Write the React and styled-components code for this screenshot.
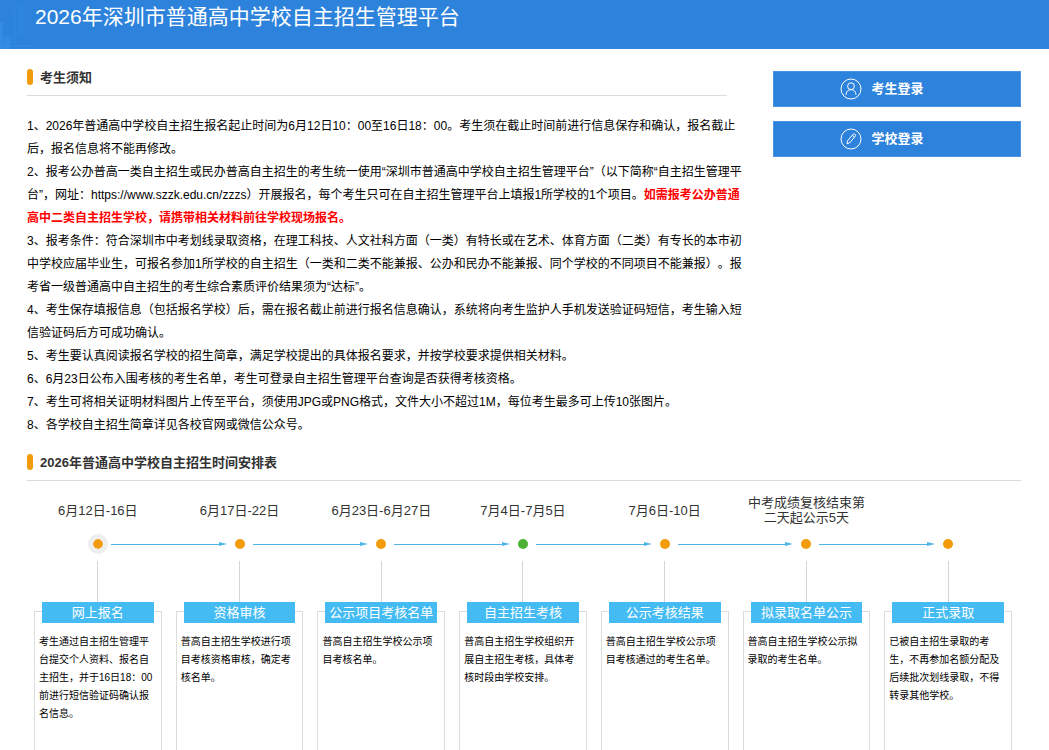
import React from "react";
import styled, { createGlobalStyle } from "styled-components";

const GlobalStyle = createGlobalStyle`
  * {
    box-sizing: border-box;
  }
  body {
    margin: 0;
    background: #fff;
    color: #000;
    font-family: "Liberation Sans", "Noto Sans CJK SC", sans-serif;
    font-size: 12px;
    text-spacing-trim: space-all;
  }
`;

const Page = styled.div`
  display: flex;
  flex-direction: column;
  min-height: 100vh;
`;

const Header = styled.header`
  position: relative;
  padding: 2px 35px 17px;
  background: #2d82dc;
`;

const Skyline = styled.svg`
  position: absolute;
  left: 0;
  top: 0;
`;

const SiteTitle = styled.h1`
  position: relative;
  margin: 0;
  color: #fff;
  font-size: 21px;
  font-weight: 400;
  line-height: 30px;
`;

const Content = styled.main`
  display: flex;
  flex-direction: column;
  flex: 1;
  padding: 9px 28px 0 27px;
`;

const Top = styled.div`
  display: flex;
  gap: 28px;
`;

const Notice = styled.section`
  flex: 1;
  min-width: 0;
`;

const SectionTitle = styled.h2`
  display: flex;
  align-items: center;
  gap: 7px;
  height: 38px;
  margin: 0 ${(props) => (props.$short ? "18px" : "0")} 0 0;
  border-bottom: 1px solid #dcdcdc;
  color: #333;
  font-size: 13px;
  font-weight: 600;

  &::before {
    content: "";
    width: 6px;
    height: 16px;
    border-radius: 3px;
    background: #f39c0b;
  }
`;

const NoticeBody = styled.div`
  padding: 19px 0 6px;
  line-height: 23px;

  p {
    margin: 0;
  }
`;

const Warn = styled.strong`
  color: #f00;
`;

const Side = styled.aside`
  display: flex;
  flex-direction: column;
  gap: 14px;
  width: 248px;
  padding-top: 13px;
`;

const LoginButton = styled.button`
  display: flex;
  align-items: center;
  justify-content: center;
  gap: 9px;
  height: 36px;
  padding: 0 30px 0 0;
  border: 1px solid #4a95e4;
  background: #2d82dc;
  color: #fff;
  font-family: inherit;
  font-size: 13px;
  font-weight: 700;
  cursor: pointer;
`;

const LoginLabel = styled.span`
  padding-bottom: 4px;
`;

const Schedule = styled.section`
  display: flex;
  flex-direction: column;
  flex: 1;
`;

const Steps = styled.ol`
  display: grid;
  grid-template-columns: repeat(7, 1fr);
  flex: 1;
  margin: 0;
  padding: 5px 2px 0 0;
  list-style: none;
`;

const Step = styled.li`
  display: flex;
  flex-direction: column;
  min-width: 0;
`;

const StepDate = styled.div`
  display: flex;
  align-items: center;
  justify-content: center;
  height: 48px;
  padding: 0 10px;
  color: #333;
  font-size: 13px;
  line-height: 15px;
  text-align: center;
`;

const Rail = styled.div`
  display: grid;
  grid-template-columns: 1fr 20px 1fr;
  align-items: center;
  height: 20px;
`;

const Dot = styled.span`
  grid-column: 2;
  width: 20px;
  height: 20px;
  border: 5px solid ${(props) => (props.$first ? "#eee" : "transparent")};
  border-radius: 50%;
  background: ${(props) => (props.$current ? "#4cb034" : "#f39c0b")};
  background-clip: padding-box;
`;

/* runs from this dot over to the next column's dot */
const Arrow = styled.span`
  display: flex;
  align-items: center;
  margin: 0 calc(3px - 100%) 0 3px;

  &::before {
    content: "";
    flex: 1;
    height: 1px;
    background: #4fb5e8;
  }
  &::after {
    content: "";
    border-left: 8px solid #4fb5e8;
    border-top: 2px solid transparent;
    border-bottom: 2px solid transparent;
  }
`;

const Stem = styled.div`
  align-self: center;
  width: 1px;
  height: 41px;
  margin-top: 7px;
  background: #d5d5d5;
`;

const Card = styled.div`
  flex: 1;
  margin: 9px 7px 0;
  border: 1px solid #dcdcdc;
  border-bottom: 0;
`;

const CardTitle = styled.h3`
  margin: -10px 7px 0;
  background: #44bbf2;
  color: #fff;
  font-size: 13px;
  font-weight: 400;
  line-height: 21px;
  text-align: center;
  white-space: nowrap;
`;

const CardText = styled.p`
  margin: 0;
  padding: 10px 6px 10px 4px;
  font-size: 10px;
  line-height: 18px;
`;

const steps = [
  {
    date: "6月12日-16日",
    title: "网上报名",
    text: "考生通过自主招生管理平台提交个人资料、报名自主招生，并于16日18：00前进行短信验证码确认报名信息。",
  },
  {
    date: "6月17日-22日",
    title: "资格审核",
    text: "普高自主招生学校进行项目考核资格审核，确定考核名单。",
  },
  {
    date: "6月23日-6月27日",
    title: "公示项目考核名单",
    text: "普高自主招生学校公示项目考核名单。",
  },
  {
    date: "7月4日-7月5日",
    title: "自主招生考核",
    text: "普高自主招生学校组织开展自主招生考核，具体考核时段由学校安排。",
    current: true,
  },
  {
    date: "7月6日-10日",
    title: "公示考核结果",
    text: "普高自主招生学校公示项目考核通过的考生名单。",
  },
  {
    date: "中考成绩复核结束第二天起公示5天",
    title: "拟录取名单公示",
    text: "普高自主招生学校公示拟录取的考生名单。",
  },
  {
    date: "",
    title: "正式录取",
    text: "已被自主招生录取的考生，不再参加名额分配及后续批次划线录取，不得转录其他学校。",
  },
];

const UserIcon = () => (
  <svg width="22" height="22" viewBox="0 0 22 22" fill="none" stroke="#fff">
    <circle cx="11" cy="11" r="10" />
    <circle cx="11" cy="8.2" r="3.4" />
    <path d="M6 16.8c.2-3.2 2-5.2 5-5.2s4.8 2 5 5.2" />
  </svg>
);

const PencilIcon = () => (
  <svg width="22" height="22" viewBox="0 0 22 22" fill="none" stroke="#fff">
    <circle cx="11" cy="11" r="10" />
    <path d="M7 15.8l.6-3 5.7-6.7c.8-.8 2.9.8 2.2 1.8l-5.6 6.7zM12.3 7.3l2.100 1.8" />
  </svg>
);

export default function App() {
  return (
    <>
      <GlobalStyle />
      <Page>
        <Header>
          <Skyline width="40" height="49" viewBox="0 0 40 49" fill="#3f9aea">
            <path d="M0 22h3v27H0z" opacity=".4" />
            <path d="M4 36h7v13H4z" opacity=".35" />
            <path d="M13 10h3v34h-3zM18 4h6v32h-6z" opacity=".18" />
            <path d="M0 45h32v2H0z" opacity=".2" />
          </Skyline>
          <SiteTitle>2026年深圳市普通高中学校自主招生管理平台</SiteTitle>
        </Header>
        <Content>
          <Top>
            <Notice>
              <SectionTitle $short>考生须知</SectionTitle>
              <NoticeBody>
                <p>
                  1、2026年普通高中学校自主招生报名起止时间为6月12日10：00至16日18：00。考生须在截止时间前进行信息保存和确认，报名截止
                  <br />
                  后，报名信息将不能再修改。
                </p>
                <p>
                  2、报考公办普高一类自主招生或民办普高自主招生的考生统一使用“深圳市普通高中学校自主招生管理平台”（以下简称“自主招生管理平
                  <br />
                  台”，网址：https://www.szzk.edu.cn/zzzs）开展报名，每个考生只可在自主招生管理平台上填报1所学校的1个项目。
                  <Warn>
                    如需报考公办普通
                    <br />
                    高中二类自主招生学校，请携带相关材料前往学校现场报名。
                  </Warn>
                </p>
                <p>
                  3、报考条件：符合深圳市中考划线录取资格，在理工科技、人文社科方面（一类）有特长或在艺术、体育方面（二类）有专长的本市初
                  <br />
                  中学校应届毕业生，可报名参加1所学校的自主招生（一类和二类不能兼报、公办和民办不能兼报、同个学校的不同项目不能兼报）。报
                  <br />
                  考省一级普通高中自主招生的考生综合素质评价结果须为“达标”。
                </p>
                <p>
                  4、考生保存填报信息（包括报名学校）后，需在报名截止前进行报名信息确认，系统将向考生监护人手机发送验证码短信，考生输入短
                  <br />
                  信验证码后方可成功确认。
                </p>
                <p>
                  5、考生要认真阅读报名学校的招生简章，满足学校提出的具体报名要求，并按学校要求提供相关材料。
                </p>
                <p>
                  6、6月23日公布入围考核的考生名单，考生可登录自主招生管理平台查询是否获得考核资格。
                </p>
                <p>
                  7、考生可将相关证明材料图片上传至平台，须使用JPG或PNG格式，文件大小不超过1M，每位考生最多可上传10张图片。
                </p>
                <p>8、各学校自主招生简章详见各校官网或微信公众号。</p>
              </NoticeBody>
            </Notice>
            <Side>
              <LoginButton type="button">
                <UserIcon />
                <LoginLabel>考生登录</LoginLabel>
              </LoginButton>
              <LoginButton type="button">
                <PencilIcon />
                <LoginLabel>学校登录</LoginLabel>
              </LoginButton>
            </Side>
          </Top>
          <Schedule>
            <SectionTitle>2026年普通高中学校自主招生时间安排表</SectionTitle>
            <Steps>
              {steps.map((step, i) => (
                <Step key={step.title}>
                  <StepDate>{step.date}</StepDate>
                  <Rail>
                    <Dot $first={i === 0} $current={step.current} />
                    {i < steps.length - 1 && <Arrow />}
                  </Rail>
                  <Stem />
                  <Card>
                    <CardTitle>{step.title}</CardTitle>
                    <CardText>{step.text}</CardText>
                  </Card>
                </Step>
              ))}
            </Steps>
          </Schedule>
        </Content>
      </Page>
    </>
  );
}
